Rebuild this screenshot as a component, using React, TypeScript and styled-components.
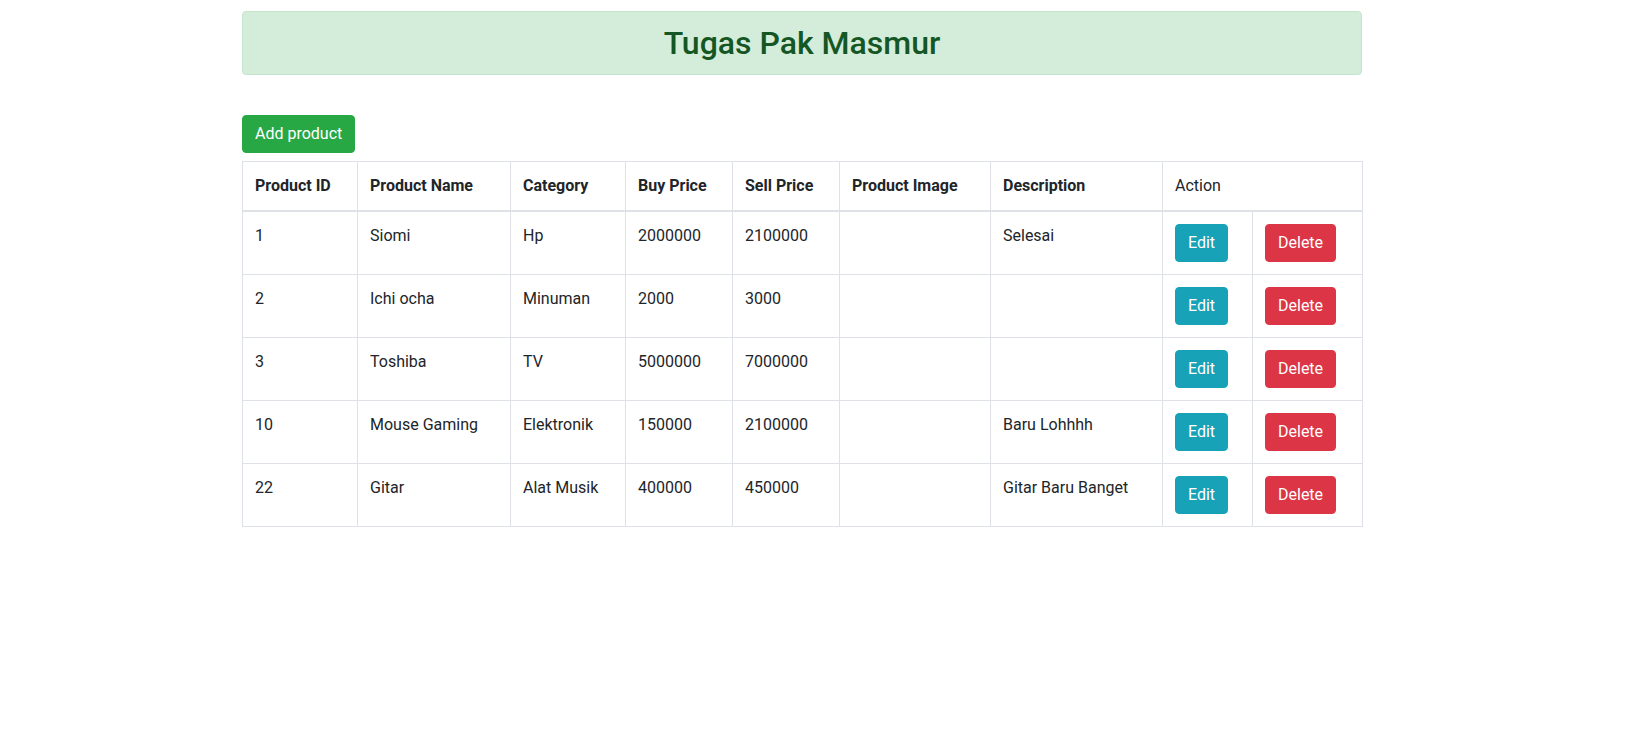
import React from "react";
import styled, { createGlobalStyle } from "styled-components";

const GlobalStyle = createGlobalStyle`
  * { box-sizing: border-box; }
  html, body { margin: 0; padding: 0; background: #fff; }
  body {
    font-family: Roboto, "Liberation Sans", Arial, sans-serif;
    font-size: 16px;
    line-height: 1.5;
    color: #212529;
  }
`;

const Page = styled.div`
  width: 1120px;
  margin-left: 242px;
  padding-top: 11px;
`;

const Alert = styled.div`
  background: #d4edda;
  border: 1px solid #c3e6cb;
  color: #155724;
  border-radius: 4px;
  padding: 12px 20px;
  margin-bottom: 16px;
`;

const Title = styled.h2`
  margin: 0;
  text-align: center;
  font-size: 32px;
  font-weight: 500;
  line-height: 1.2;
`;

const Spacer = styled.div`
  height: 24px;
`;

const Button = styled.button<{ $variant: "success" | "info" | "danger" }>`
  display: inline-block;
  font-family: inherit;
  font-size: 16px;
  line-height: 1.5;
  font-weight: 400;
  padding: 6px 12px;
  border-radius: 4px;
  color: #fff;
  cursor: pointer;
  border: 1px solid
    ${(p) =>
      p.$variant === "success" ? "#28a745" : p.$variant === "info" ? "#17a2b8" : "#dc3545"};
  background: ${(p) =>
    p.$variant === "success" ? "#28a745" : p.$variant === "info" ? "#17a2b8" : "#dc3545"};
`;

const Toolbar = styled.div`
  margin-bottom: 8px;
`;

const Table = styled.table`
  width: 100%;
  table-layout: fixed;
  border-collapse: collapse;
  border: 1px solid #dee2e6;
`;

const Th = styled.th<{ $normal?: boolean }>`
  text-align: left;
  padding: 12px;
  vertical-align: bottom;
  border: 1px solid #dee2e6;
  border-bottom: 2px solid #dee2e6;
  font-weight: ${(p) => (p.$normal ? 400 : 700)};
`;

const Td = styled.td`
  padding: 12px;
  vertical-align: top;
  border: 1px solid #dee2e6;
`;

const widths = [115, 153, 115, 107, 107, 151, 172, 90, 110];

const rows = [
  { id: "1", name: "Siomi", cat: "Hp", buy: "2000000", sell: "2100000", desc: "Selesai" },
  { id: "2", name: "Ichi ocha", cat: "Minuman", buy: "2000", sell: "3000", desc: "" },
  { id: "3", name: "Toshiba", cat: "TV", buy: "5000000", sell: "7000000", desc: "" },
  { id: "10", name: "Mouse Gaming", cat: "Elektronik", buy: "150000", sell: "2100000", desc: "Baru Lohhhh" },
  { id: "22", name: "Gitar", cat: "Alat Musik", buy: "400000", sell: "450000", desc: "Gitar Baru Banget" },
];

export default function App() {
  return (
    <>
      <GlobalStyle />
      <Page>
        <Alert>
          <Title>Tugas Pak Masmur</Title>
        </Alert>
        <Spacer />
        <Toolbar>
          <Button $variant="success">Add product</Button>
        </Toolbar>
        <Table>
          <colgroup>
            {widths.map((w, i) => (
              <col key={i} style={{ width: w }} />
            ))}
          </colgroup>
          <thead>
            <tr>
              <Th>Product ID</Th>
              <Th>Product Name</Th>
              <Th>Category</Th>
              <Th>Buy Price</Th>
              <Th>Sell Price</Th>
              <Th>Product Image</Th>
              <Th>Description</Th>
              <Th $normal colSpan={2}>Action</Th>
            </tr>
          </thead>
          <tbody>
            {rows.map((r) => (
              <tr key={r.id}>
                <Td>{r.id}</Td>
                <Td>{r.name}</Td>
                <Td>{r.cat}</Td>
                <Td>{r.buy}</Td>
                <Td>{r.sell}</Td>
                <Td></Td>
                <Td>{r.desc}</Td>
                <Td>
                  <Button $variant="info">Edit</Button>
                </Td>
                <Td>
                  <Button $variant="danger">Delete</Button>
                </Td>
              </tr>
            ))}
          </tbody>
        </Table>
      </Page>
    </>
  );
}
